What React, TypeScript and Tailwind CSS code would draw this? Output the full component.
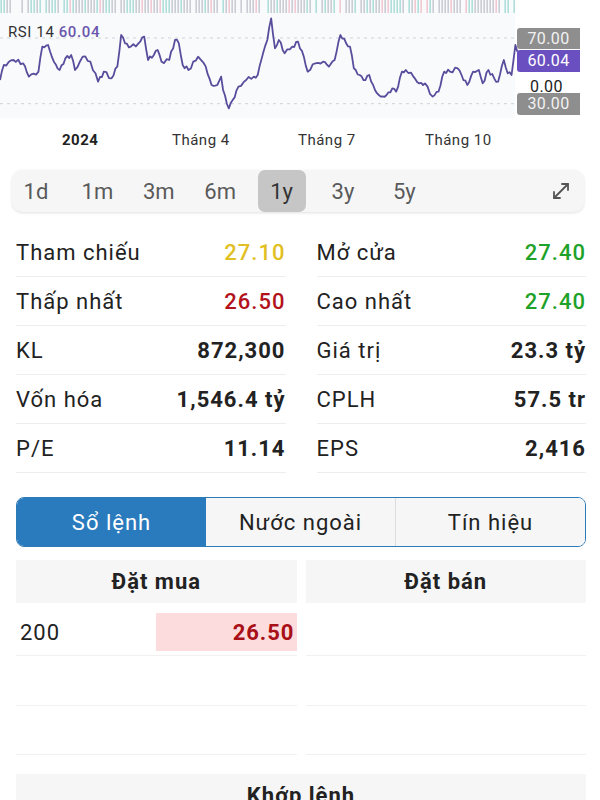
import { MoveDiagonal } from "lucide-react";

// RSI line key points, traced in a 1560x360 frame (600x120 on screen)
const rsiKeys: [number, number][] = [
  [0, 240], [10, 195], [35, 180], [60, 190], [75, 230], [100, 215], [110, 140], [125, 135],
  [140, 185], [155, 210], [170, 175], [185, 165], [195, 210], [215, 170], [235, 185], [255, 245],
  [270, 215], [290, 235], [305, 200], [315, 105], [325, 130], [340, 140], [360, 130], [375, 110],
  [385, 180], [400, 165], [410, 150], [420, 185], [440, 180], [455, 120], [465, 130], [475, 195],
  [490, 210], [515, 170], [535, 200], [550, 255], [565, 255], [575, 230], [580, 270], [595, 325],
  [605, 300], [620, 260], [640, 240], [660, 230], [670, 225], [685, 155], [695, 120], [705, 55],
  [715, 145], [725, 120], [740, 160], [760, 140], [775, 125], [790, 170], [800, 215], [820, 190],
  [840, 185], [855, 200], [870, 180], [885, 105], [900, 130], [910, 140], [920, 205], [935, 225],
  [945, 240], [960, 225], [975, 270], [990, 290], [1005, 285], [1020, 265], [1030, 275], [1045, 215],
  [1055, 210], [1075, 230], [1090, 250], [1105, 250], [1125, 290], [1140, 275], [1155, 215], [1170, 215],
  [1190, 205], [1200, 225], [1215, 255], [1230, 215], [1245, 210], [1255, 250], [1270, 210], [1285, 235],
  [1295, 245], [1310, 180], [1320, 220], [1330, 225], [1340, 135], [1345, 155],
];

function jagged(points: [number, number][]) {
  const out: [number, number][] = [];
  for (let i = 0; i < points.length - 1; i++) {
    const [x0, y0] = points[i];
    const [x1, y1] = points[i + 1];
    const steps = Math.max(1, Math.round((x1 - x0) / 6));
    for (let s = 0; s < steps; s++) {
      const t = s / steps;
      const j = s === 0 ? 0 : Math.sin((x0 + s * 6) * 1.7) * 6;
      out.push([x0 + (x1 - x0) * t, y0 + (y1 - y0) * t + j]);
    }
  }
  out.push(points[points.length - 1]);
  return out.map(([x, y]) => `${x.toFixed(1)},${y.toFixed(1)}`).join(" ");
}

const rand = (i: number) => {
  const v = Math.sin(i * 12.9898 + 4.1) * 43758.5453;
  return v - Math.floor(v);
};

const volumeBars = Array.from({ length: 172 }, (_, i) => {
  const r = rand(i);
  const color = r < 0.18 ? "#f1bcc8" : r < 0.42 ? "#9ed8d1" : "#bfc2ca";
  return { x: i * 3 + 0.5, color, skip: rand(i + 500) < 0.12 };
});

const stats = [
  ["Tham chiếu", "27.10", "text-[#e2bf22] font-medium", "Mở cửa", "27.40", "text-[#1fa22a] font-medium"],
  ["Thấp nhất", "26.50", "text-[#b3121b] font-medium", "Cao nhất", "27.40", "text-[#1fa22a] font-medium"],
  ["KL", "872,300", "text-[#222] font-bold", "Giá trị", "23.3 tỷ", "text-[#222] font-bold"],
  ["Vốn hóa", "1,546.4 tỷ", "text-[#222] font-bold", "CPLH", "57.5 tr", "text-[#222] font-bold"],
  ["P/E", "11.14", "text-[#222] font-bold", "EPS", "2,416", "text-[#222] font-bold"],
];

const periods = ["1d", "1m", "3m", "6m", "1y", "3y", "5y"];

function RsiChart() {
  return (
    <div className="relative h-[120px] overflow-hidden bg-white">
      <div className="absolute left-0 top-0 h-[118px] w-[515px] bg-[#f8fafc]" />
      {/* volume bars cut off at the top */}
      <svg className="absolute left-0 top-0" width={515} height={13}>
        {volumeBars.map((b, i) =>
          b.skip ? null : (
            <rect key={i} x={b.x} y={0} width={1.3} height={13} fill={b.color} />
          )
        )}
      </svg>
      <svg
        className="absolute left-0 top-0"
        width={600}
        height={120}
        viewBox="0 0 1560 360"
        preserveAspectRatio="none"
      >
        <line x1={0} x2={1340} y1={114} y2={114} stroke="#cfd3d8" strokeDasharray="3 4" vectorEffect="non-scaling-stroke" />
        <line x1={0} x2={1340} y1={311} y2={311} stroke="#cfd3d8" strokeDasharray="3 4" vectorEffect="non-scaling-stroke" />
        <polyline
          points={jagged(rsiKeys)}
          fill="none"
          stroke="#5a4c9c"
          strokeWidth={1.8}
          strokeLinejoin="round"
          vectorEffect="non-scaling-stroke"
        />
      </svg>
      <div className="absolute left-[8px] top-[23px] text-[15px] leading-[18px] tracking-[0.6px] text-[#333]">
        RSI 14 <span className="font-medium text-[#6a56ad]">60.04</span>
      </div>
      <div className="absolute left-[525px] top-[-14px] text-[16px] leading-[18px] text-[#555]">70.00</div>
      <div className="absolute left-[517px] top-[28px] flex h-[21px] w-[63px] items-center justify-center rounded-l-[3px] bg-[#8e8e8e] text-[16px] tracking-[0.4px] text-[#f2f2f2]">
        70.00
      </div>
      <div className="absolute left-[517px] top-[50px] flex h-[22px] w-[63px] items-center justify-center rounded-l-[3px] bg-[#6a4fc0] text-[16px] tracking-[0.4px] text-white">
        60.04
      </div>
      <div className="absolute left-[530px] top-[78px] text-[16px] leading-[18px] tracking-[0.4px] text-[#222]">0.00</div>
      <div className="absolute left-[517px] top-[93px] flex h-[22px] w-[63px] items-center justify-center rounded-l-[3px] bg-[#8e8e8e] text-[16px] tracking-[0.4px] text-[#f2f2f2]">
        30.00
      </div>
    </div>
  );
}

function TimeAxis() {
  return (
    <div className="relative h-[38px] text-[15px] tracking-[0.5px] text-[#333]">
      <span className="absolute left-[62px] top-[9px] font-bold text-[#222]">2024</span>
      <span className="absolute left-[172px] top-[9px]">Tháng 4</span>
      <span className="absolute left-[298px] top-[9px]">Tháng 7</span>
      <span className="absolute left-[425px] top-[9px]">Tháng 10</span>
    </div>
  );
}

export default function App() {
  return (
    <div className="h-[800px] w-[600px] overflow-hidden bg-white font-['Roboto',sans-serif]">
      <RsiChart />
      <TimeAxis />

      {/* Period selector */}
      <div className="ml-[12px] mr-[16px] mt-[12px] flex h-[42px] items-center gap-[13.4px] rounded-[10px] bg-[#f6f6f6] shadow-[0_1px_3px_rgba(0,0,0,0.12)]">
        {periods.map((p) => (
          <div
            key={p}
            className={
              p === "1y"
                ? "flex h-[42px] w-[48px] items-center justify-center rounded-[7px] bg-[#c6c6c6] text-[22px] text-[#333]"
                : "flex h-[42px] w-[48px] items-center justify-center text-[22px] text-[#5a5a5a]"
            }
          >
            {p}
          </div>
        ))}
        <MoveDiagonal className="ml-auto mr-[11px] text-[#555]" size={24} strokeWidth={1.8} />
      </div>

      {/* Stats */}
      <div className="ml-[16px] mr-[14px] mt-[16px] grid grid-cols-2 gap-x-[31px] text-[22px] tracking-[1px]">
        {stats.map(([l1, v1, c1, l2, v2, c2]) => (
          <div key={l1} className="contents">
            <div className="flex h-[49px] items-center justify-between border-b border-[#ededed]">
              <span className="text-[#222]">{l1}</span>
              <span className={c1}>{v1}</span>
            </div>
            <div className="flex h-[49px] items-center justify-between border-b border-[#ededed]">
              <span className="text-[#222]">{l2}</span>
              <span className={c2}>{v2}</span>
            </div>
          </div>
        ))}
      </div>

      {/* Tabs */}
      <div className="ml-[16px] mr-[14px] mt-[24px] flex h-[50px] overflow-hidden rounded-[8px] border-[1.5px] border-[#2c7ab6] text-[22px] tracking-[1px]">
        <div className="flex flex-1 items-center justify-center bg-[#2a7bbd] text-white">Sổ lệnh</div>
        <div className="flex flex-1 items-center justify-center border-r border-[#dcdcdc] bg-[#f6f6f6] text-[#222]">
          Nước ngoài
        </div>
        <div className="flex flex-1 items-center justify-center bg-[#f6f6f6] text-[#222]">Tín hiệu</div>
      </div>

      {/* Order book */}
      <div className="ml-[16px] mr-[14px] mt-[13px] grid grid-cols-2 gap-x-[9px] text-[22px] tracking-[1px]">
        <div className="flex h-[43px] items-center justify-center bg-[#f6f6f6] font-bold text-[#222]">Đặt mua</div>
        <div className="flex h-[43px] items-center justify-center bg-[#f6f6f6] font-bold text-[#222]">Đặt bán</div>

        <div className="flex h-[53px] items-start justify-between border-b border-[#f1f1f1] pt-[10px]">
          <span className="flex h-[38px] items-center pl-[4px] text-[#222]">200</span>
          <span className="flex h-[38px] w-[141px] items-center justify-end bg-[#fcdcdc] pr-[2px] font-bold text-[#a80f17]">
            26.50
          </span>
        </div>
        <div className="h-[53px] border-b border-[#f1f1f1]" />
        <div className="h-[50px] border-b border-[#f1f1f1]" />
        <div className="h-[50px] border-b border-[#f1f1f1]" />
        <div className="h-[49px] border-b border-[#f1f1f1]" />
        <div className="h-[49px] border-b border-[#f1f1f1]" />
      </div>

      <div className="ml-[16px] mr-[14px] mt-[19px] flex h-[43px] items-center justify-center bg-[#f6f6f6] text-[22px] font-bold tracking-[1px] text-[#222]">
        Khớp lệnh
      </div>
    </div>
  );
}
